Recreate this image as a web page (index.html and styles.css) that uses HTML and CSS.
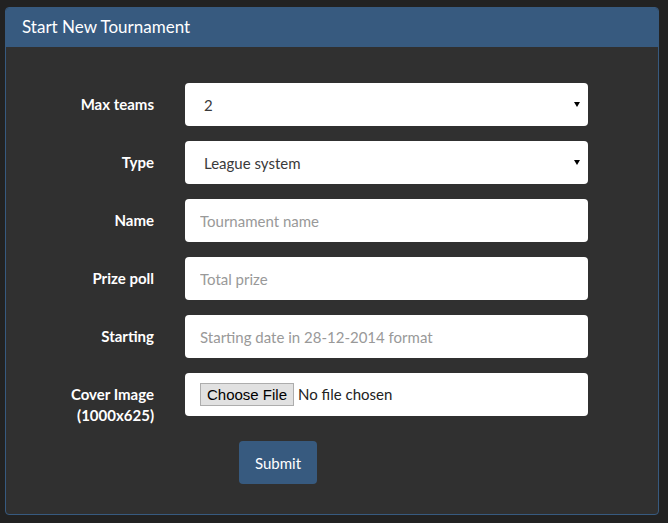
FILE: index.html
```html
<!DOCTYPE html>
<html>
<head>
<meta charset="utf-8">
<link rel="stylesheet" href="styles.css">
</head>
<body>
<div class="panel">
  <div class="panel-heading">Start New Tournament</div>
  <form class="panel-body">
    <label class="ctl-label">Max teams</label>
    <div class="select-wrap"><select class="ctl"><option>2</option><option>4</option><option>8</option></select></div>

    <label class="ctl-label">Type</label>
    <div class="select-wrap"><select class="ctl"><option>League system</option></select></div>

    <label class="ctl-label">Name</label>
    <input class="ctl" type="text" placeholder="Tournament name">

    <label class="ctl-label">Prize poll</label>
    <input class="ctl" type="text" placeholder="Total prize">

    <label class="ctl-label">Starting</label>
    <input class="ctl" type="text" placeholder="Starting date in 28-12-2014 format">

    <label class="ctl-label">Cover Image<br>(1000x625)</label>
    <div class="ctl file-box"><input class="file" type="file"></div>

    <div class="submit-row"><button type="button" class="btn">Submit</button></div>
  </form>
</div>
</body>
</html>
```

FILE: styles.css
```css
html, body {
  margin: 0;
  padding: 0;
  background: #222222;
  font-family: Lato, "Open Sans", sans-serif;
}
body {
  padding: 7px 9px 8px 5px;
}
.panel {
  border: 1px solid #375a7f;
  border-radius: 4px;
  background: #303030;
  overflow: hidden;
}
.panel-heading {
  background: #375a7f;
  color: #ffffff;
  font-size: 17px;
  line-height: 20px;
  height: 39px;
  box-sizing: border-box;
  padding: 9px 16px 10px;
}
.panel-body {
  margin: 0;
  padding: 36px 0 30px 0;
  display: grid;
  grid-template-columns: 148px 403px;
  column-gap: 31px;
  row-gap: 15px;
}
.ctl-label {
  color: #ffffff;
  font-weight: bold;
  font-size: 15px;
  line-height: 21px;
  padding-top: 11px;
  text-align: right;
}
.ctl {
  box-sizing: border-box;
  width: 403px;
  height: 43px;
  border: none;
  border-radius: 4px;
  background: #ffffff;
  font-family: Lato, "Open Sans", sans-serif;
  font-size: 15px;
  color: #3a3a3a;
  padding: 0 15px;
  outline: none;
  margin: 0;
}
.ctl::placeholder {
  color: #999999;
}
.select-wrap {
  position: relative;
  width: 403px;
  height: 43px;
}
.select-wrap select {
  appearance: none;
  -webkit-appearance: none;
  padding-left: 19px;
}
.select-wrap::after {
  content: "";
  position: absolute;
  right: 8px;
  top: 19px;
  width: 0;
  height: 0;
  border-left: 3px solid transparent;
  border-right: 3px solid transparent;
  border-top: 5px solid #000000;
  pointer-events: none;
}
.file-box {
  display: flex;
  align-items: flex-start;
  padding-top: 10px;
}
.file {
  font-family: Lato, "Open Sans", sans-serif;
  font-size: 15px;
  color: #222222;
}
.file::file-selector-button {
  font-family: "Liberation Sans", Arial, sans-serif;
  font-size: 15px;
  color: #000000;
  height: 23px;
  padding: 0 6px;
  margin-right: 4px;
  background: #e1e1e1;
  border: 1px solid #adadad;
  border-radius: 0;
}
.submit-row {
  grid-column: 2;
}
.btn {
  margin-left: 54px;
  width: 78px;
  height: 43px;
  border: none;
  border-radius: 4px;
  background: #375a7f;
  color: #ffffff;
  font-family: Lato, "Open Sans", sans-serif;
  font-size: 15px;
  padding: 0;
}
```
